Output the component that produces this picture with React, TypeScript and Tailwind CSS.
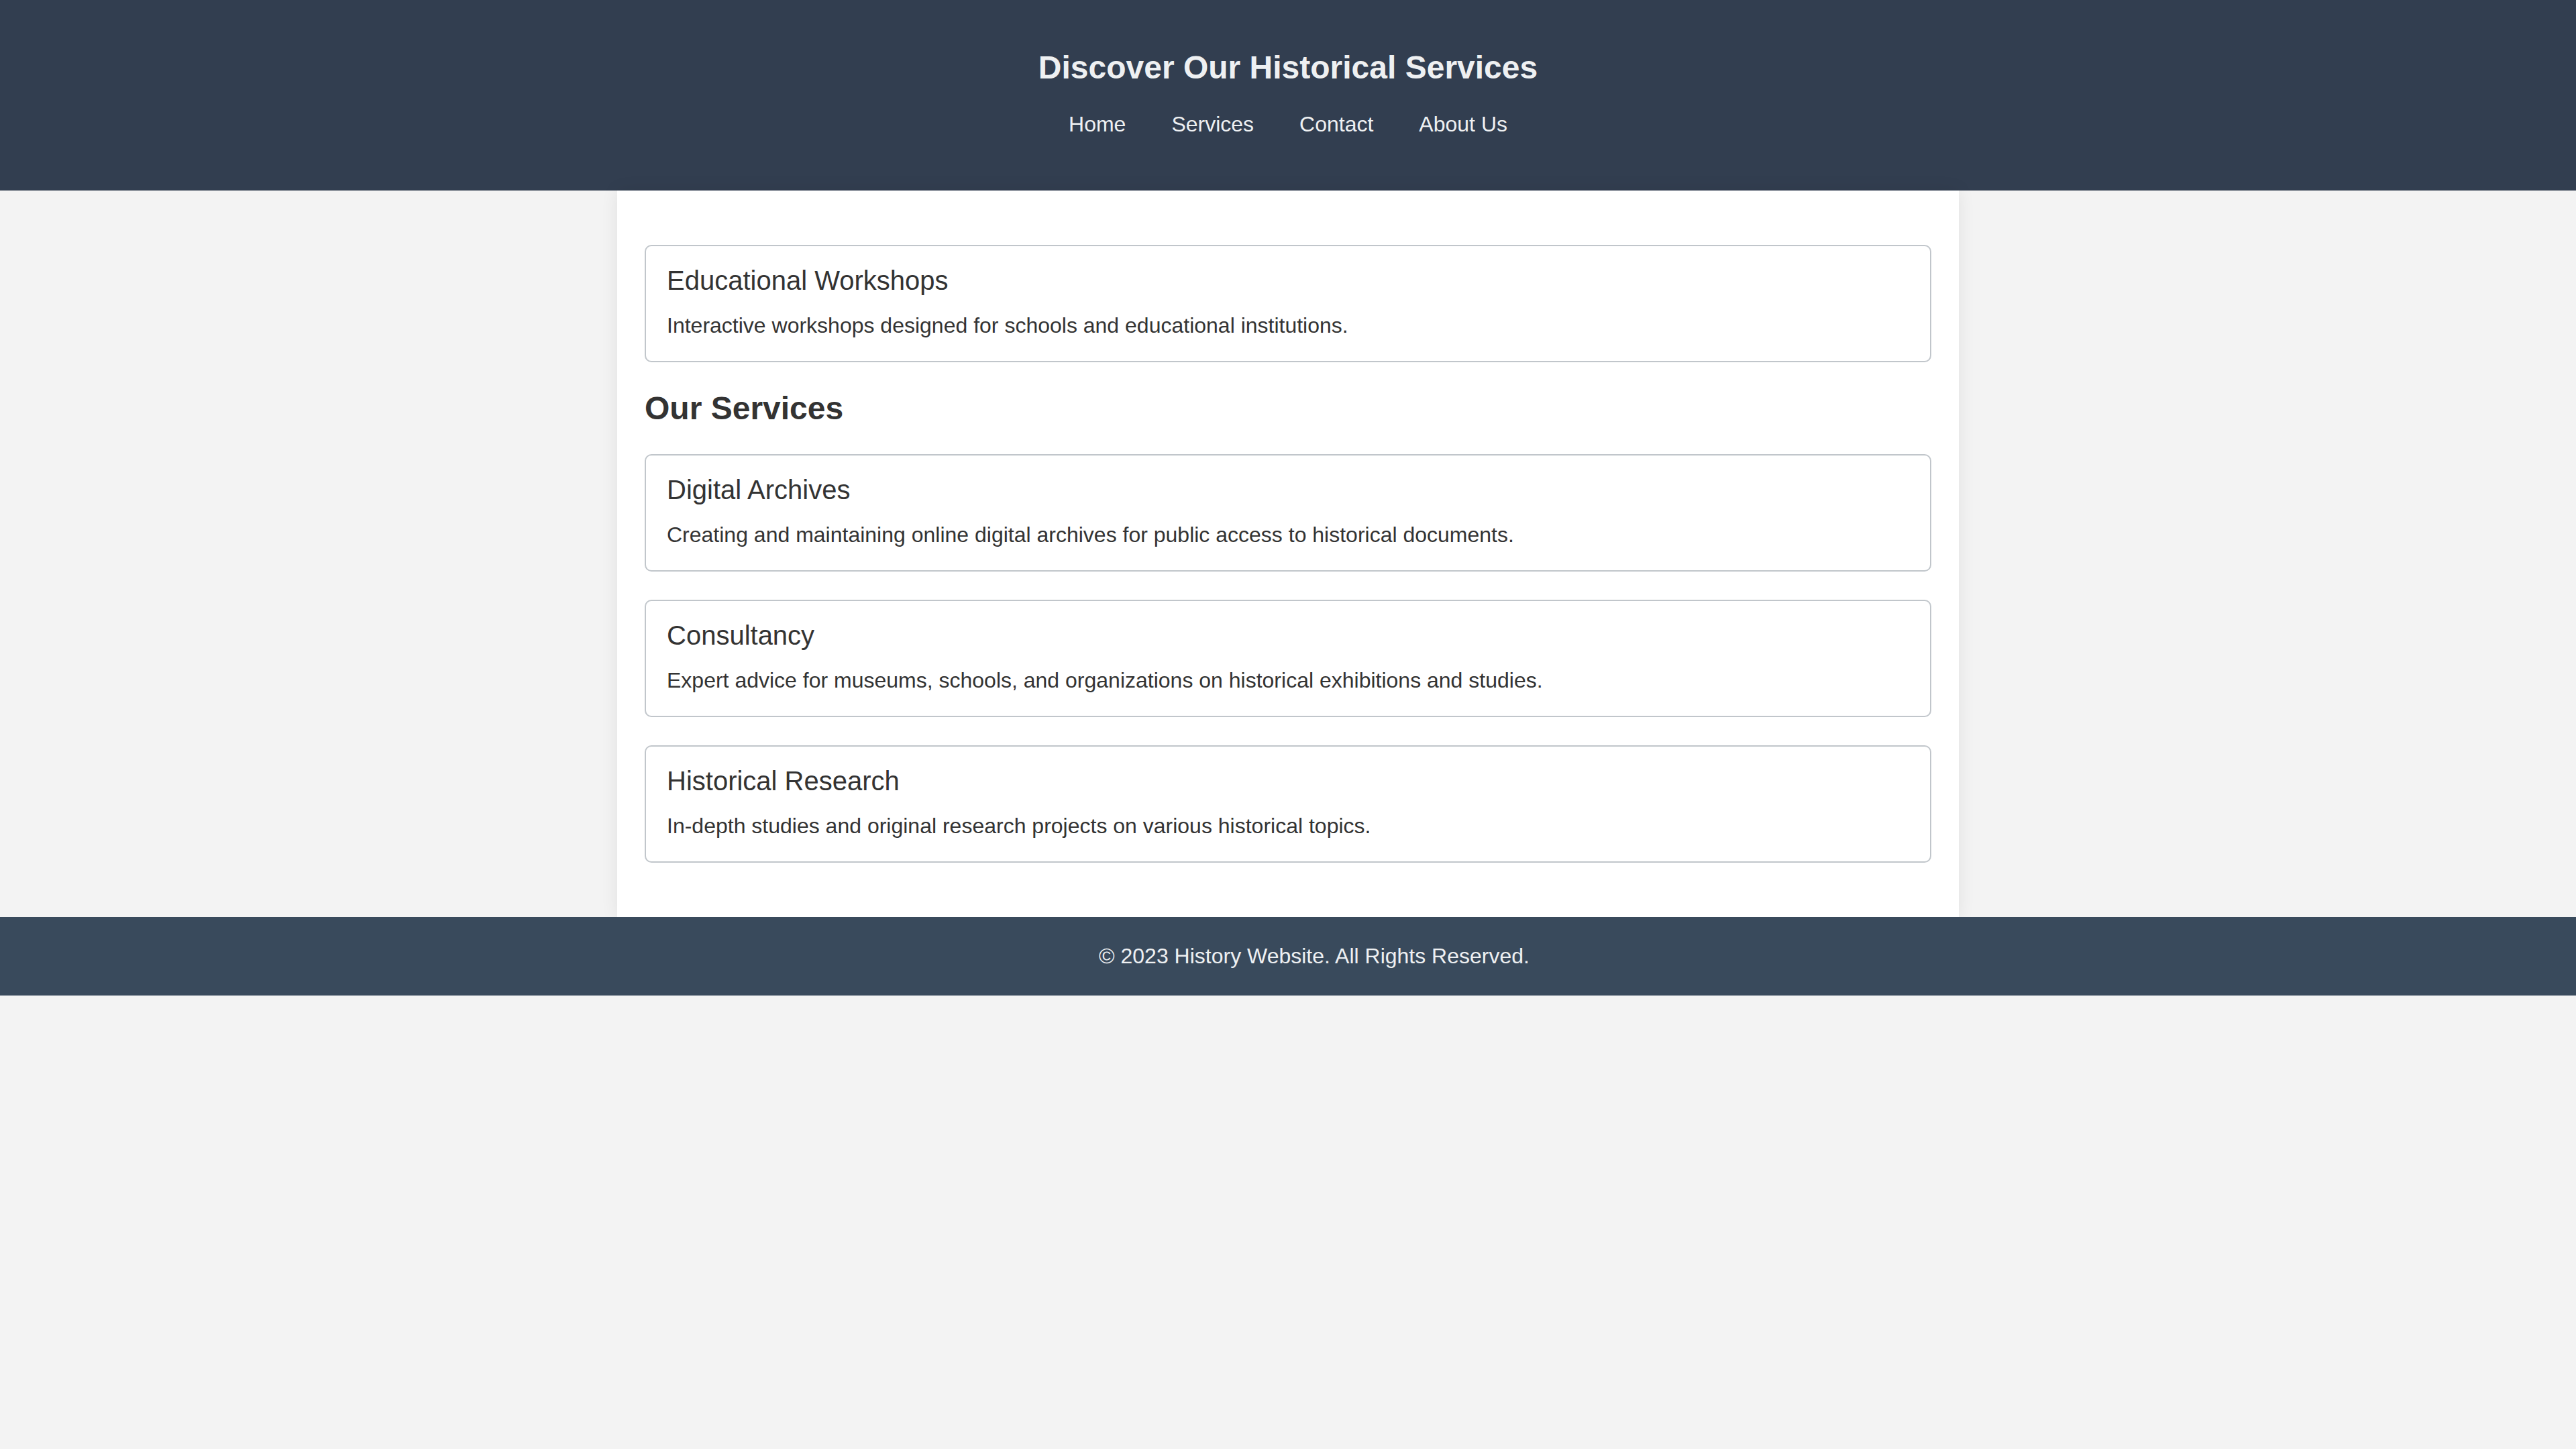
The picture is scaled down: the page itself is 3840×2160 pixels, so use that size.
const services = [
  {
    title: 'Digital Archives',
    description: 'Creating and maintaining online digital archives for public access to historical documents.',
  },
  {
    title: 'Consultancy',
    description: 'Expert advice for museums, schools, and organizations on historical exhibitions and studies.',
  },
  {
    title: 'Historical Research',
    description: 'In-depth studies and original research projects on various historical topics.',
  },
];

function ServiceCard({ title, description }: { title: string; description: string }) {
  return (
    <div className="rounded-[10px] border-2 border-solid border-[#c1c6cb] bg-white px-[31px] pt-[29px] pb-[34px]">
      <h3 className="text-[40px] font-normal leading-[45px] text-[#333]">{title}</h3>
      <p className="mt-[26px] text-[32px] leading-[37px] text-[#333]">{description}</p>
    </div>
  );
}

export default function App() {
  const links = ['Home', 'Services', 'Contact', 'About Us'];

  return (
    <div className="min-h-[2160px] bg-[#f3f3f3] font-['Liberation_Sans',Arial,sans-serif]">
      {/* Header */}
      <header className="bg-[#323e50] pt-[73px] pb-[80px] text-center text-[#eef0f2]">
        <h1 className="text-[48px] font-bold leading-[55px]">Discover Our Historical Services</h1>
        <nav className="mt-[39px] flex justify-center gap-[68px] text-[32px] leading-[37px]">
          {links.map((link) => (
            <a key={link} href="#" className="text-[#eef0f2] no-underline">
              {link}
            </a>
          ))}
        </nav>
      </header>

      {/* Main */}
      <main className="mx-auto w-[2000px] bg-white px-[41px] py-[81px] shadow-[0_0_24px_rgba(0,0,0,0.08)]">
        <div className="flex flex-col gap-[41px]">
          <ServiceCard
            title="Educational Workshops"
            description="Interactive workshops designed for schools and educational institutions."
          />
          <h2 className="text-[48px] font-bold leading-[55px] text-[#333]">Our Services</h2>
          <div className="flex flex-col gap-[42px]">
            {services.map((s) => (
              <ServiceCard key={s.title} title={s.title} description={s.description} />
            ))}
          </div>
        </div>
      </main>

      {/* Footer */}
      <footer className="bg-[#394a5c] py-[40px] pl-[78px] text-center text-[32px] leading-[37px] text-[#eef0f2]">
        © 2023 History Website. All Rights Reserved.
      </footer>
    </div>
  );
}
